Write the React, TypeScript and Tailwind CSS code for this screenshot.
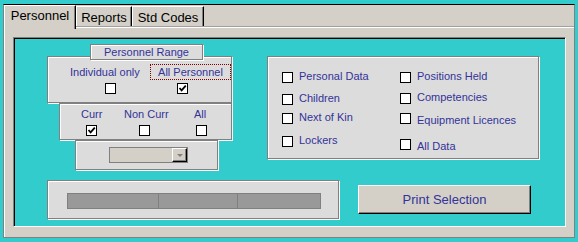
import React from 'react';

const panel =
  'bg-[#dcdcdc] border border-[#808080] shadow-[1px_1px_0_#ffffff,inset_1px_1px_0_#ffffff]';

function Check({ checked = false }: { checked?: boolean }) {
  return (
    <span className="block w-[11px] h-[11px] border border-black bg-white shrink-0">
      {checked && (
        <svg width="9" height="9" viewBox="0 0 9 9" className="block">
          <path d="M1.5 4 L3.6 6.3 L7.8 1.6" fill="none" stroke="#000" strokeWidth="1.8" />
        </svg>
      )}
    </span>
  );
}

function Item({ label, mt, tmt = 'mt-[-2px]' }: { label: string; mt: string; tmt?: string }) {
  return (
    <div className={`flex items-start ${mt}`}>
      <Check />
      <span className={`ml-[6px] leading-[13px] whitespace-nowrap ${tmt}`}>{label}</span>
    </div>
  );
}

function Tab({ label, selected, w }: { label: string; selected?: boolean; w: string }) {
  if (selected) {
    return (
      <div
        className={`${w} h-[24px] self-start relative z-10 -mb-[3px] bg-[#d4d0c8] border-t border-l border-white border-r border-r-black shadow-[inset_-1px_0_0_#808080] pt-[2px] text-center leading-[15px] text-[13px] text-black`}
      >
        {label}
      </div>
    );
  }
  return (
    <div
      className={`${w} h-[20px] bg-[#d4d0c8] border-t border-l border-white border-r border-r-black shadow-[inset_-1px_0_0_#808080] pt-[3px] text-center leading-[15px] text-[13px] text-black`}
    >
      {label}
    </div>
  );
}

export default function App() {
  return (
    <div className="w-[578px] h-[242px] bg-[#33cccc] overflow-hidden pt-[4px] pl-[3px] font-['Liberation_Sans',Arial,sans-serif]">
      <div className="w-[572px] h-[234px] flex flex-col bg-[#d4d0c8] border-t border-t-black border-l border-r border-b border-[#808080]">
        {/* tab strip */}
        <div className="h-[22px] flex items-end border-b border-[#a0a0a0]">
          <Tab label="Personnel" selected w="w-[72px]" />
          <Tab label="Reports" w="w-[56px]" />
          <Tab label="Std Codes" w="w-[72px]" />
        </div>

        {/* page */}
        <div className="flex-1 border-t border-l border-white pl-[8px] pt-[9px]">
          <div className="w-[553px] h-[190px] bg-[#33cccc] border-t border-l border-[#808080] border-r border-b border-r-white border-b-white shadow-[inset_1px_1px_0_#000000] text-[11px] text-[#333399]">
            {/* top row */}
            <div className="flex items-start mt-[6px]">
              <div className="flex flex-col w-[185px] ml-[33px]">
                <div className={`ml-[43px] w-[113px] h-[16px] relative z-10 ${panel} text-center leading-[14px]`}>
                  Personnel Range
                </div>

                <div className={`-mt-[4px] w-[185px] h-[47px] ${panel}`}>
                  <div className="flex items-center h-[16px] mt-[7px]">
                    <span className="w-[102px] pl-[22px] leading-[13px] whitespace-nowrap">Individual only</span>
                    <span className="w-[81px] h-[16px] border border-dotted border-[#800000] flex items-center justify-center leading-[13px] whitespace-nowrap">
                      All Personnel
                    </span>
                  </div>
                  <div className="flex mt-[3px]">
                    <span className="ml-[57px]">
                      <Check />
                    </span>
                    <span className="ml-[61px]">
                      <Check checked />
                    </span>
                  </div>
                </div>

                <div className={`ml-[12px] w-[173px] h-[37px] ${panel}`}>
                  <div className="flex items-center h-[14px] mt-[3px] leading-[13px]">
                    <span className="w-[64px] pl-[21px]">Curr</span>
                    <span className="w-[70px] whitespace-nowrap">Non Curr</span>
                    <span>All</span>
                  </div>
                  <div className="flex mt-[4px]">
                    <span className="ml-[26px]">
                      <Check checked />
                    </span>
                    <span className="ml-[42px]">
                      <Check />
                    </span>
                    <span className="ml-[46px]">
                      <Check />
                    </span>
                  </div>
                </div>

                <div className={`ml-[28px] w-[143px] h-[30px] ${panel}`}>
                  <div className="ml-[33px] mt-[6px] w-[79px] h-[16px] flex bg-[#d4d0c8] border border-[#808080]">
                    <div className="flex-1" />
                    <div className="w-[15px] h-full flex items-center justify-center border-t border-l border-white border-r border-b border-r-black border-b-black shadow-[inset_-1px_-1px_0_#808080]">
                      <span className="w-0 h-0 border-l-[3px] border-r-[3px] border-t-[3px] border-l-transparent border-r-transparent border-t-[#808080]" />
                    </div>
                  </div>
                </div>
              </div>

              <div className={`ml-[35px] mt-[12px] w-[272px] h-[103px] ${panel} flex`}>
                <div className="w-[118px] ml-[14px] pt-[15px] flex flex-col">
                  <Item label="Personal Data" mt="mt-0" />
                  <Item label="Children" mt="mt-[11px]" />
                  <Item label="Next of Kin" mt="mt-[8px]" />
                  <Item label="Lockers" mt="mt-[12px]" />
                </div>
                <div className="pt-[15px] flex flex-col">
                  <Item label="Positions Held" mt="mt-0" />
                  <Item label="Competencies" mt="mt-[10px]" />
                  <Item label="Equipment Licences" mt="mt-[9px]" tmt="mt-[1px]" />
                  <Item label="All Data" mt="mt-[12px]" tmt="mt-[1px]" />
                </div>
              </div>
            </div>

            {/* bottom row */}
            <div className="flex items-start mt-[10px]">
              <div className={`ml-[33px] w-[292px] h-[39px] ${panel}`}>
                <div className="ml-[19px] mt-[12px] w-[254px] h-[16px] flex border border-[#808080] bg-[#999999]">
                  <div className="w-[90px]" />
                  <div className="w-[79px] border-l border-[#808080]" />
                  <div className="w-[83px] border-l border-[#808080]" />
                </div>
              </div>
              <button className="ml-[19px] mt-[5px] w-[173px] h-[29px] bg-[#d4d0c8] border-t border-l border-white border-r border-b border-r-black border-b-black shadow-[inset_-1px_-1px_0_#808080] text-[13px] text-[#333399] leading-[15px]">
                Print Selection
              </button>
            </div>
          </div>
        </div>
      </div>
    </div>
  );
}
